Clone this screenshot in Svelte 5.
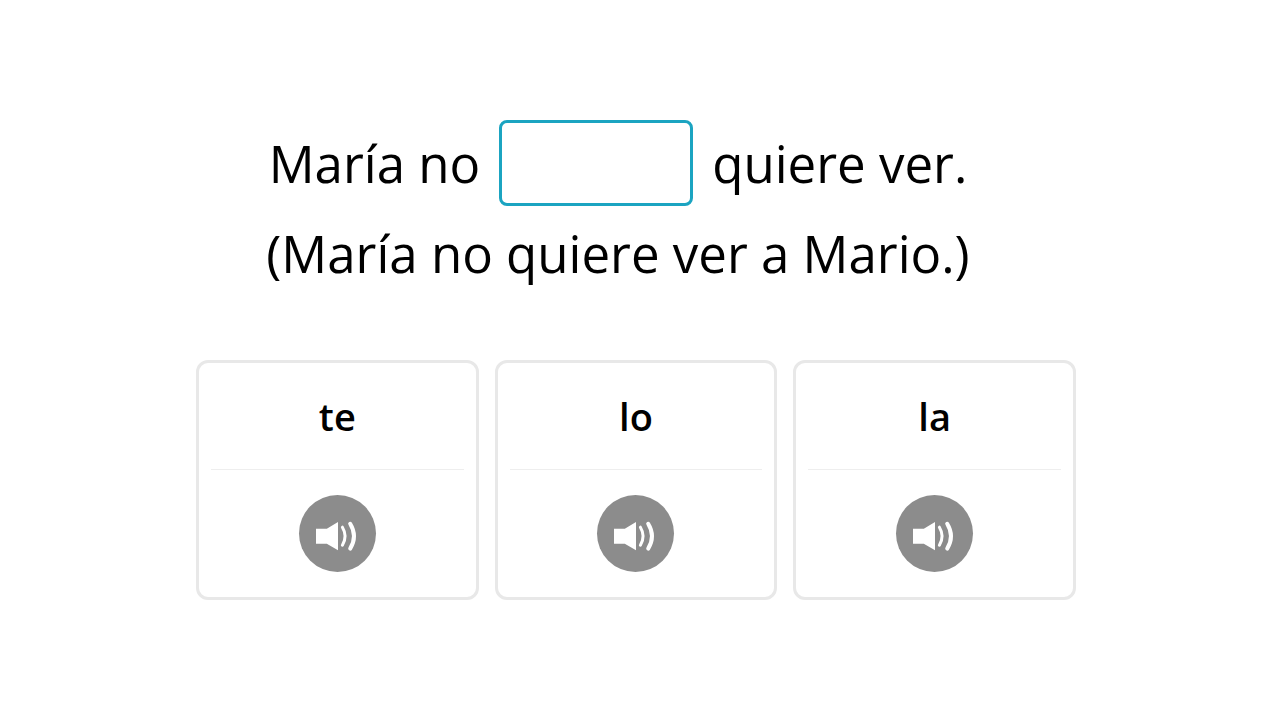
<script lang="ts">
	const choices = ['te', 'lo', 'la'];

	let answer = $state('');
</script>

<main class="exercise">
	<div class="prompt">
		<p class="line">
			<span>María no</span>
			<input class="blank" type="text" aria-label="Respuesta" bind:value={answer} />
			<span>quiere ver.</span>
		</p>
		<p class="line">(María no quiere ver a Mario.)</p>
	</div>

	<div class="choices">
		{#each choices as choice}
			<div class="card">
				<button class="word" onclick={() => (answer = choice)}>{choice}</button>
				<div class="listen">
					<button class="sound" aria-label="Escuchar {choice}">
						<svg viewBox="0 0 77 77" aria-hidden="true">
							<path class="speaker" d="M17 33.700h10.800L39 27v28.300l-11.200-6.600H17z" />
							<path d="M43.400 32.200q5.400 9 0 18" />
							<path class="wave-outer" d="M51.200 28.800q7.600 12.400 0 24.800" />
						</svg>
					</button>
				</div>
			</div>
		{/each}
	</div>
</main>

<style>
	:global(body) {
		margin: 0;
		background: #fff;
	}

	.exercise {
		box-sizing: border-box;
		max-width: 888px;
		margin: 0 auto;
		padding: 120px 8px 0 0;
		font-family: 'Open Sans', 'Noto Sans', sans-serif;
		color: #000;
	}

	.prompt {
		display: flex;
		flex-direction: column;
		align-items: center;
		gap: 8px;
		padding-right: 36px;
		font-size: 51px;
		line-height: 78px;
	}

	.line {
		display: flex;
		align-items: center;
		gap: 19px;
		margin: 0;
	}

	.blank {
		box-sizing: border-box;
		width: 194px;
		height: 86px;
		padding: 0 12px;
		border: 3px solid #1ba4c1;
		border-radius: 8px;
		background: #fff;
		font: inherit;
		text-align: center;
	}

	.choices {
		display: grid;
		grid-template-columns: repeat(3, 1fr);
		gap: 16px;
		margin-top: 68px;
	}

	.card {
		padding: 0 12px;
		border: 3px solid #e8e8e8;
		border-radius: 12px;
	}

	.word {
		width: 100%;
		height: 107px;
		padding: 0;
		border: 0;
		border-bottom: 1px solid #eee;
		background: none;
		color: inherit;
		font: inherit;
		font-size: 38px;
		font-weight: 600;
		cursor: pointer;
	}

	.listen {
		display: flex;
		justify-content: center;
		padding: 25px 0;
	}

	.sound {
		width: 77px;
		height: 77px;
		padding: 0;
		border: 0;
		border-radius: 50%;
		background: #8c8c8c;
		color: #fff;
		cursor: pointer;
	}

	.sound svg {
		display: block;
		fill: none;
		stroke: currentColor;
		stroke-width: 3;
		stroke-linecap: round;
	}

	.sound .speaker {
		fill: currentColor;
		stroke: none;
	}

	.sound .wave-outer {
		stroke-width: 4;
	}
</style>
